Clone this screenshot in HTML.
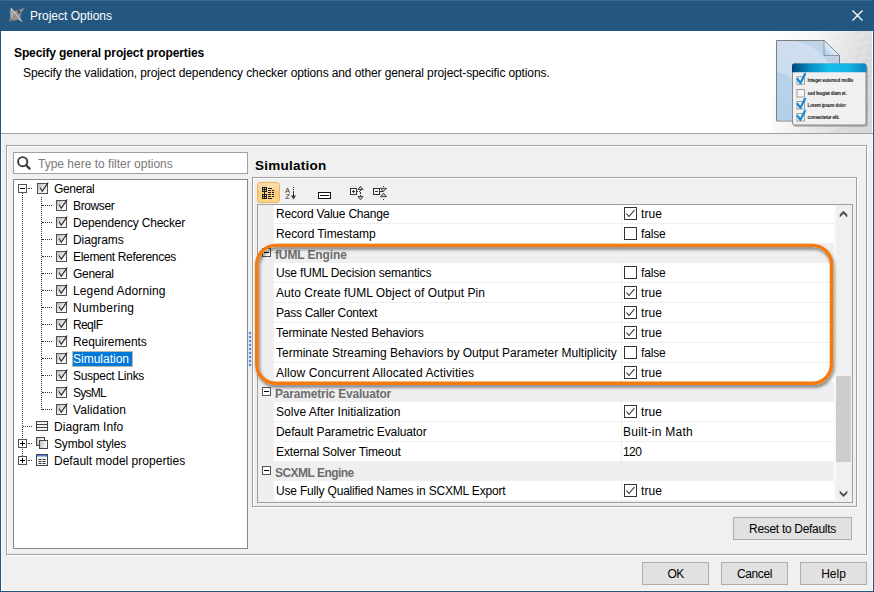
<!DOCTYPE html>
<html><head><meta charset="utf-8"><title>Project Options</title>
<style>
html,body{margin:0;padding:0}
body{width:874px;height:592px;overflow:hidden;position:relative;background:#f0f0f0;font-family:"Liberation Sans",sans-serif;font-size:12px;color:#000}
div,span{position:absolute;box-sizing:border-box;white-space:nowrap}
svg{position:absolute;overflow:visible}
.t{line-height:16px;height:16px}
.btn{border:1px solid #adadad;background:#e1e1e1;text-align:center;line-height:22px;height:23px}
.ti{left:0;width:234px;height:17px}
.cb{width:11px;height:11px;border:1px solid #505050;background:linear-gradient(135deg,#b8b8b8 0%,#ececec 55%,#fff 100%)}
.row{left:0;height:20px}
.c1{left:16px;width:347px;top:0;height:19px;background:#fff}
.c2{left:364px;width:212px;top:0;height:19px;background:#fff}
.vcb{left:2px;top:3px;width:13px;height:13px;border:1px solid #333;background:#fff}
</style></head><body>

<div style="left:0;top:0;width:874px;height:31px;background:#245780;border-top:1px solid #3a6991;border-left:1px solid #3a6991"></div>
<div style="left:0;top:0;width:1px;height:592px;background:#25567f"></div>
<div style="left:873px;top:0;width:1px;height:592px;background:#25567f"></div>
<div style="left:0;top:591px;width:874px;height:1px;background:#25567f"></div>
<div style="left:1px;top:31px;width:1px;height:560px;background:#fbf8f6"></div>
<div style="left:872px;top:31px;width:1px;height:560px;background:#fbf8f6"></div>
<div style="left:1px;top:590px;width:872px;height:1px;background:#fbf8f6"></div>
<svg style="left:0;top:0" width="40" height="31" viewBox="0 0 40 31"><defs><linearGradient id="aig" x1="0" y1="0" x2="1" y2="1"><stop offset="0" stop-color="#b8b8b8"/><stop offset="0.5" stop-color="#8c8c8c"/><stop offset="1" stop-color="#a8a8a8"/></linearGradient></defs>
<path d="M11 8 L14 11.3 L18.5 9.8 L24.8 7.8 L20.8 13.3 L20.4 18 L22 21.8 L18 19.6 L10.5 21.7 L9 21.2 L10.3 18 L10 12 Z" fill="url(#aig)"/>
<path d="M17 10.5 L19.5 9.8 L20.3 12.6 L18.7 13.8 Z" fill="#3c3c3c" opacity="0.85"/>
<path d="M10.5 20.3 L13.5 20 L12.5 21.2 L10 21.3 Z" fill="#333" opacity="0.7"/>
<path d="M11.2 8.3 L21.7 21.5" stroke="#e0e0e0" stroke-width="0.9" stroke-linecap="round"/>
<path d="M13 13 L11.5 18" stroke="#c8c8c8" stroke-width="1" opacity="0.7"/>
</svg>
<span class="t" style="left:30px;top:8px;color:#fff">Project Options</span>
<svg style="left:852px;top:10px" width="11" height="11" viewBox="0 0 11 11"><path d="M0.5 0.5 L10.5 10.5 M10.5 0.5 L0.5 10.5" stroke="#fff" stroke-width="1.3" fill="none"/></svg>
<div style="left:1px;top:31px;width:872px;height:102px;background:#fff"></div>
<div style="left:1px;top:133px;width:872px;height:1px;background:#a0a0a0"></div>
<span class="t" style="left:14px;top:45px;font-weight:bold;letter-spacing:-0.12px">Specify general project properties</span>
<span class="t" style="left:23px;top:65px;letter-spacing:-0.115px">Specify the validation, project dependency checker options and other general project-specific options.</span>
<svg style="left:772px;top:31px;overflow:hidden" width="100" height="102" viewBox="0 -1 100 102">
<defs>
<linearGradient id="bgg" x1="0" y1="0" x2="1" y2="0.35"><stop offset="0" stop-color="#fff"/><stop offset="0.4" stop-color="#f6f6f6"/><stop offset="1" stop-color="#d9dadb"/></linearGradient>
<linearGradient id="bgf" x1="0" y1="0" x2="1" y2="0"><stop offset="0" stop-color="#fff"/><stop offset="0.3" stop-color="#fff" stop-opacity="0"/></linearGradient>
<linearGradient id="pg" x1="0.8" y1="0" x2="0.2" y2="1"><stop offset="0" stop-color="#c3d3e8"/><stop offset="0.5" stop-color="#bcd0e7"/><stop offset="1" stop-color="#9cc6e6"/></linearGradient>
<linearGradient id="hb" x1="0" y1="0" x2="1" y2="0"><stop offset="0" stop-color="#00457a"/><stop offset="0.25" stop-color="#0a8fc4"/><stop offset="0.5" stop-color="#14bdea"/><stop offset="0.75" stop-color="#12b4e4"/><stop offset="1" stop-color="#0b86bd"/></linearGradient>
<linearGradient id="fold" x1="0" y1="1" x2="1" y2="0"><stop offset="0" stop-color="#9fc4ea"/><stop offset="0.6" stop-color="#f4f9ff"/><stop offset="1" stop-color="#fff"/></linearGradient>
<pattern id="grid" width="9" height="9" patternUnits="userSpaceOnUse" patternTransform="skewX(-35) rotate(-18)"><path d="M0 0 H9 M0 0 V9" stroke="#b7c0cc" stroke-width="0.6" fill="none"/></pattern>
<linearGradient id="gm" x1="0" y1="0" x2="1" y2="0.3"><stop offset="0.45" stop-color="#fff" stop-opacity="0"/><stop offset="1" stop-color="#fff" stop-opacity="0.9"/></linearGradient>
<mask id="gmask"><rect x="0" y="-1" width="100" height="102" fill="url(#gm)"/></mask>
</defs>
<rect x="0" y="-1" width="100" height="102" fill="url(#bgg)"/>
<rect x="0" y="-1" width="100" height="102" fill="url(#grid)" mask="url(#gmask)"/>
<path d="M4.5 8.5 H52 L67.5 23.5 V89 H4.5 Z" fill="url(#pg)" stroke="#7f7f7f" stroke-width="1"/>
<path d="M5 9 H22 Q58 14 67 60 V88.5 H5 Z" fill="#dbe6f3" opacity="0.6"/>
<path d="M5 40 Q30 45 44 88.5 H5 Z" fill="#a6c8e6" opacity="0.5"/>
<path d="M52 8.5 V23.5 H67.5 Z" fill="url(#fold)" stroke="#7f8a96" stroke-width="0.8" stroke-linejoin="round"/>
<rect x="22" y="34" width="74" height="61" rx="2" fill="#6e6e6e" opacity="0.3"/>
<rect x="21" y="33" width="74.5" height="61.5" rx="2" fill="#6e6e6e" opacity="0.2"/>
<rect x="20.5" y="32" width="73.5" height="61" rx="2" fill="#f0f0f0" stroke="#8a8a8a"/>
<path d="M20 40.3 V33.5 Q20 31.6 22 31.6 H92.5 Q94.5 31.6 94.5 33.5 V40.3 Z" fill="url(#hb)"/>
<g font-family="Liberation Sans, sans-serif" font-size="4.6" font-weight="bold" fill="#111" letter-spacing="-0.2">
<text x="35.6" y="50">Integer euismod mollis</text>
<text x="35.6" y="63">sed feugiat diam et.</text>
<text x="35.6" y="74.7">Lorem ipsum dolor</text>
<text x="35.6" y="86.6">consectetur elit.</text>
</g>
<g fill="#f6f6f6" stroke="#8a8a8a" stroke-width="0.8">
<rect x="25" y="44.8" width="7.5" height="7.5"/><rect x="25" y="57.5" width="7.5" height="7.5"/><rect x="25" y="69.5" width="7.5" height="7.5"/><rect x="25" y="81.5" width="7.5" height="7.5"/>
</g>
<g fill="none" stroke="#1489d6" stroke-width="2.2" stroke-linecap="round" stroke-linejoin="round">
<path d="M25.5 47 L28.5 51 L33 42"/><path d="M25.5 71.8 L28.5 75.8 L33 66.8"/><path d="M25.5 83.8 L28.5 87.8 L33 78.8"/>
</g>
</svg>
<div style="left:6px;top:145px;width:861px;height:410px;border:1px solid #fff;border-left-color:#a0a0a0;border-top-color:#a0a0a0;border-right-color:#a0a0a0;border-bottom-color:#a0a0a0"></div>
<div style="left:7px;top:146px;width:861px;height:410px;border:1px solid #fff;border-right-color:#fff;border-bottom-color:#fff;border-left-color:#fff;border-top-color:#fff;clip-path:polygon(0 0,100% 0,100% 100%,0 100%)"></div>
<div style="left:6px;top:145px;width:861px;height:410px;border:1px solid #a0a0a0"></div>
<div style="left:13px;top:152px;width:235px;height:22px;border:1px solid #a0a0a0;background:#fff"></div>
<svg style="left:16px;top:155px" width="16" height="16" viewBox="0 0 16 16"><circle cx="6.7" cy="6.7" r="4.6" fill="none" stroke="#3a3a3a" stroke-width="1.9"/><path d="M10.2 10.2 L13.6 13.6" stroke="#3a3a3a" stroke-width="2.3" stroke-linecap="round"/></svg>
<span class="t" style="left:38px;top:156px;color:#7a7a7a">Type here to filter options</span>
<div style="left:13px;top:179px;width:235px;height:370px;border:1px solid #828790;background:#fff"></div>
<div style="left:22px;top:193px;width:0;height:267px;border-left:1px dotted #333"></div>
<div style="left:41px;top:197px;width:0;height:213px;border-left:1px dotted #333"></div>
<div id="tree" style="left:14px;top:180px;width:233px;height:368px">
<div class="ti" style="top:0px">
<svg style="left:4px;top:4px" width="9" height="9" viewBox="0 0 9 9"><rect x="0.5" y="0.5" width="8" height="8" fill="#fff" stroke="#555"/><path d="M2 4.5 H7" stroke="#000" stroke-width="1"/></svg>
<div style="left:14px;top:8px;width:4px;height:0;border-top:1px dotted #333"></div>
<div class="cb" style="left:23px;top:3px"></div><svg style="left:23px;top:1px" width="13" height="13" viewBox="0 0 13 13"><path d="M3 6.5 L5.3 10.2 L11.2 1.5" fill="none" stroke="#2a2a2a" stroke-width="1.2"/></svg>
<span class="t" style="left:40px;top:1px;letter-spacing:-0.344px;">General</span>
</div>
<div class="ti" style="top:17px">
<div style="left:28px;top:8px;width:10px;height:0;border-top:1px dotted #333"></div>
<div class="cb" style="left:42px;top:3px"></div><svg style="left:42px;top:1px" width="13" height="13" viewBox="0 0 13 13"><path d="M3 6.5 L5.3 10.2 L11.2 1.5" fill="none" stroke="#2a2a2a" stroke-width="1.2"/></svg>
<span class="t" style="left:59px;top:1px;letter-spacing:-0.370px;">Browser</span>
</div>
<div class="ti" style="top:34px">
<div style="left:28px;top:8px;width:10px;height:0;border-top:1px dotted #333"></div>
<div class="cb" style="left:42px;top:3px"></div><svg style="left:42px;top:1px" width="13" height="13" viewBox="0 0 13 13"><path d="M3 6.5 L5.3 10.2 L11.2 1.5" fill="none" stroke="#2a2a2a" stroke-width="1.2"/></svg>
<span class="t" style="left:59px;top:1px;letter-spacing:-0.187px;">Dependency Checker</span>
</div>
<div class="ti" style="top:51px">
<div style="left:28px;top:8px;width:10px;height:0;border-top:1px dotted #333"></div>
<div class="cb" style="left:42px;top:3px"></div><svg style="left:42px;top:1px" width="13" height="13" viewBox="0 0 13 13"><path d="M3 6.5 L5.3 10.2 L11.2 1.5" fill="none" stroke="#2a2a2a" stroke-width="1.2"/></svg>
<span class="t" style="left:59px;top:1px;letter-spacing:-0.1px;">Diagrams</span>
</div>
<div class="ti" style="top:68px">
<div style="left:28px;top:8px;width:10px;height:0;border-top:1px dotted #333"></div>
<div class="cb" style="left:42px;top:3px"></div><svg style="left:42px;top:1px" width="13" height="13" viewBox="0 0 13 13"><path d="M3 6.5 L5.3 10.2 L11.2 1.5" fill="none" stroke="#2a2a2a" stroke-width="1.2"/></svg>
<span class="t" style="left:59px;top:1px;letter-spacing:-0.322px;">Element References</span>
</div>
<div class="ti" style="top:85px">
<div style="left:28px;top:8px;width:10px;height:0;border-top:1px dotted #333"></div>
<div class="cb" style="left:42px;top:3px"></div><svg style="left:42px;top:1px" width="13" height="13" viewBox="0 0 13 13"><path d="M3 6.5 L5.3 10.2 L11.2 1.5" fill="none" stroke="#2a2a2a" stroke-width="1.2"/></svg>
<span class="t" style="left:59px;top:1px;letter-spacing:-0.286px;">General</span>
</div>
<div class="ti" style="top:102px">
<div style="left:28px;top:8px;width:10px;height:0;border-top:1px dotted #333"></div>
<div class="cb" style="left:42px;top:3px"></div><svg style="left:42px;top:1px" width="13" height="13" viewBox="0 0 13 13"><path d="M3 6.5 L5.3 10.2 L11.2 1.5" fill="none" stroke="#2a2a2a" stroke-width="1.2"/></svg>
<span class="t" style="left:59px;top:1px;letter-spacing:0.121px;">Legend Adorning</span>
</div>
<div class="ti" style="top:119px">
<div style="left:28px;top:8px;width:10px;height:0;border-top:1px dotted #333"></div>
<div class="cb" style="left:42px;top:3px"></div><svg style="left:42px;top:1px" width="13" height="13" viewBox="0 0 13 13"><path d="M3 6.5 L5.3 10.2 L11.2 1.5" fill="none" stroke="#2a2a2a" stroke-width="1.2"/></svg>
<span class="t" style="left:59px;top:1px;letter-spacing:0.291px;">Numbering</span>
</div>
<div class="ti" style="top:136px">
<div style="left:28px;top:8px;width:10px;height:0;border-top:1px dotted #333"></div>
<div class="cb" style="left:42px;top:3px"></div><svg style="left:42px;top:1px" width="13" height="13" viewBox="0 0 13 13"><path d="M3 6.5 L5.3 10.2 L11.2 1.5" fill="none" stroke="#2a2a2a" stroke-width="1.2"/></svg>
<span class="t" style="left:59px;top:1px;letter-spacing:-0.640px;">ReqIF</span>
</div>
<div class="ti" style="top:153px">
<div style="left:28px;top:8px;width:10px;height:0;border-top:1px dotted #333"></div>
<div class="cb" style="left:42px;top:3px"></div><svg style="left:42px;top:1px" width="13" height="13" viewBox="0 0 13 13"><path d="M3 6.5 L5.3 10.2 L11.2 1.5" fill="none" stroke="#2a2a2a" stroke-width="1.2"/></svg>
<span class="t" style="left:59px;top:1px;letter-spacing:-0.083px;">Requirements</span>
</div>
<div class="ti" style="top:170px">
<div style="left:28px;top:8px;width:10px;height:0;border-top:1px dotted #333"></div>
<div class="cb" style="left:42px;top:3px"></div><svg style="left:42px;top:1px" width="13" height="13" viewBox="0 0 13 13"><path d="M3 6.5 L5.3 10.2 L11.2 1.5" fill="none" stroke="#2a2a2a" stroke-width="1.2"/></svg>
<div style="left:58px;top:1px;width:61px;height:16px;background:#0078d7;border:1px solid #bdb7a8"></div>
<span class="t" style="left:59px;top:1px;color:#fff;">Simulation</span>
</div>
<div class="ti" style="top:187px">
<div style="left:28px;top:8px;width:10px;height:0;border-top:1px dotted #333"></div>
<div class="cb" style="left:42px;top:3px"></div><svg style="left:42px;top:1px" width="13" height="13" viewBox="0 0 13 13"><path d="M3 6.5 L5.3 10.2 L11.2 1.5" fill="none" stroke="#2a2a2a" stroke-width="1.2"/></svg>
<span class="t" style="left:59px;top:1px;letter-spacing:-0.278px;">Suspect Links</span>
</div>
<div class="ti" style="top:204px">
<div style="left:28px;top:8px;width:10px;height:0;border-top:1px dotted #333"></div>
<div class="cb" style="left:42px;top:3px"></div><svg style="left:42px;top:1px" width="13" height="13" viewBox="0 0 13 13"><path d="M3 6.5 L5.3 10.2 L11.2 1.5" fill="none" stroke="#2a2a2a" stroke-width="1.2"/></svg>
<span class="t" style="left:59px;top:1px;letter-spacing:-0.720px;">SysML</span>
</div>
<div class="ti" style="top:221px">
<div style="left:28px;top:8px;width:10px;height:0;border-top:1px dotted #333"></div>
<div class="cb" style="left:42px;top:3px"></div><svg style="left:42px;top:1px" width="13" height="13" viewBox="0 0 13 13"><path d="M3 6.5 L5.3 10.2 L11.2 1.5" fill="none" stroke="#2a2a2a" stroke-width="1.2"/></svg>
<span class="t" style="left:59px;top:1px;letter-spacing:0.120px;">Validation</span>
</div>
<div class="ti" style="top:238px">
<div style="left:9px;top:8px;width:9px;height:0;border-top:1px dotted #333"></div>
<svg style="left:22px;top:3px" width="12" height="10" viewBox="0 0 12 10"><rect x="0.5" y="0.5" width="11" height="9" fill="#f4f4f4" stroke="#444"/><path d="M1 3.5 H11 M1 6.5 H11" stroke="#444" stroke-width="1"/></svg>
<span class="t" style="left:40px;top:1px;letter-spacing:0.051px;">Diagram Info</span>
</div>
<div class="ti" style="top:255px">
<svg style="left:4px;top:4px" width="9" height="9" viewBox="0 0 9 9"><rect x="0.5" y="0.5" width="8" height="8" fill="#fff" stroke="#555"/><path d="M2 4.5 H7" stroke="#000" stroke-width="1"/><path d="M4.5 2 V7" stroke="#000" stroke-width="1"/></svg>
<div style="left:14px;top:8px;width:4px;height:0;border-top:1px dotted #333"></div>
<svg style="left:22px;top:2px" width="12" height="12" viewBox="0 0 12 12"><defs><linearGradient id="syg" x1="0" y1="0" x2="1" y2="0"><stop offset="0" stop-color="#c4c4c4"/><stop offset="1" stop-color="#fff"/></linearGradient></defs><rect x="0.5" y="0.5" width="8" height="8" fill="url(#syg)" stroke="#444"/><rect x="3.5" y="3.5" width="8" height="8" fill="url(#syg)" stroke="#444"/></svg>
<span class="t" style="left:40px;top:1px;letter-spacing:-0.140px;">Symbol styles</span>
</div>
<div class="ti" style="top:272px">
<svg style="left:4px;top:4px" width="9" height="9" viewBox="0 0 9 9"><rect x="0.5" y="0.5" width="8" height="8" fill="#fff" stroke="#555"/><path d="M2 4.5 H7" stroke="#000" stroke-width="1"/><path d="M4.5 2 V7" stroke="#000" stroke-width="1"/></svg>
<div style="left:14px;top:8px;width:4px;height:0;border-top:1px dotted #333"></div>
<svg style="left:22px;top:2px" width="12" height="12" viewBox="0 0 12 12"><rect x="0.5" y="0.5" width="11" height="11" fill="#f6f6f6" stroke="#444"/><rect x="1" y="1" width="10" height="1.5" fill="#4f86d8"/><path d="M2.5 5.5 H5.5 M6.5 5.5 H9.5 M2.5 7.5 H5.5 M6.5 7.5 H9.5 M2.5 9.5 H5.5 M6.5 9.5 H9.5" stroke="#333" stroke-width="1"/></svg>
<span class="t" style="left:40px;top:1px;letter-spacing:0.017px;">Default model properties</span>
</div>
</div>
<svg style="left:248px;top:331px" width="4" height="37" viewBox="0 0 4 37"><rect x="1" y="1" width="2" height="2" fill="#3f7fdc"/><rect x="0.5" y="0.5" width="3" height="3" fill="#6fa0e8" opacity="0.35"/><rect x="1" y="5" width="2" height="2" fill="#3f7fdc"/><rect x="0.5" y="4.5" width="3" height="3" fill="#6fa0e8" opacity="0.35"/><rect x="1" y="9" width="2" height="2" fill="#3f7fdc"/><rect x="0.5" y="8.5" width="3" height="3" fill="#6fa0e8" opacity="0.35"/><rect x="1" y="13" width="2" height="2" fill="#3f7fdc"/><rect x="0.5" y="12.5" width="3" height="3" fill="#6fa0e8" opacity="0.35"/><rect x="1" y="17" width="2" height="2" fill="#3f7fdc"/><rect x="0.5" y="16.5" width="3" height="3" fill="#6fa0e8" opacity="0.35"/><rect x="1" y="21" width="2" height="2" fill="#3f7fdc"/><rect x="0.5" y="20.5" width="3" height="3" fill="#6fa0e8" opacity="0.35"/><rect x="1" y="25" width="2" height="2" fill="#3f7fdc"/><rect x="0.5" y="24.5" width="3" height="3" fill="#6fa0e8" opacity="0.35"/><rect x="1" y="29" width="2" height="2" fill="#3f7fdc"/><rect x="0.5" y="28.5" width="3" height="3" fill="#6fa0e8" opacity="0.35"/><rect x="1" y="33" width="2" height="2" fill="#3f7fdc"/><rect x="0.5" y="32.5" width="3" height="3" fill="#6fa0e8" opacity="0.35"/></svg>
<span style="left:255px;top:157px;font-size:13.5px;font-weight:bold;line-height:18px;height:18px;letter-spacing:0.25px">Simulation</span>
<div style="left:252px;top:177px;width:605px;height:330px;border:1px solid #a0a0a0"></div>
<div style="left:253px;top:178px;width:605px;height:330px;border:1px solid #fff;border-right-color:#fff;border-bottom-color:#fff"></div>
<div style="left:252px;top:177px;width:605px;height:330px;border:1px solid #a0a0a0"></div>
<div style="left:257px;top:182px;width:23px;height:21px;border:1px solid #efb45c;border-radius:3px;background:linear-gradient(#fcddb0 0%,#fad293 42%,#f9c878 44%,#fad58a 100%)"></div>
<svg style="left:0;top:0" width="874" height="592" viewBox="0 0 874 592">
<g shape-rendering="crispEdges" fill="none" stroke="#1a1a1a" stroke-width="1">
<rect x="262.5" y="187.5" width="4" height="4"/><path d="M264.5 187 V192 M262 189.5 H267"/>
<rect x="262.5" y="194.5" width="4" height="4"/><path d="M264.5 194 V199 M262 196.5 H267"/>
<path d="M264.5 192 V194"/>
<path d="M268 188.5 H272 M268 190.5 H271 M272 190.5 H274 M268 192.5 H271 M272 192.5 H274 M268 194.5 H271 M272 194.5 H274 M268 196.5 H271 M272 196.5 H274 M268 198.5 H272"/>
</g>
<g font-family="Liberation Sans, sans-serif" font-size="7.5" fill="#333"><text x="285" y="193">A</text><text x="285.2" y="199.3">Z</text></g>
<g shape-rendering="crispEdges" stroke="#333" stroke-width="1" fill="none"><path d="M293.5 187 V188 M293.5 189 V190 M293.5 191 V196"/></g>
<path d="M291 195.5 H296 L293.5 199.5 Z" fill="#333"/>
<g shape-rendering="crispEdges"><rect x="318" y="192" width="13" height="7" fill="#111"/><rect x="319" y="193" width="11" height="5" fill="#fff"/><rect x="320" y="195" width="9" height="1" fill="#111"/></g>
<g shape-rendering="crispEdges" fill="none" stroke="#333" stroke-width="1">
<rect x="350.5" y="188.5" width="6" height="6" fill="#f4f4f4"/><path d="M352 191.5 H355 M353.5 190 V193"/>
<path d="M357 191.5 H358 M359 191.5 H360 M360.5 190 V191 M360.5 192 V194 M360.5 195 V196"/>
<rect x="373.5" y="188.5" width="6" height="6" fill="#f4f4f4"/><path d="M375 191.5 H378"/>
<path d="M380 191.5 H383 M383.5 186 V187 M383.5 199 V200"/>
</g>
<g fill="#b9c3ee" stroke="#333" stroke-width="0.9" stroke-linejoin="round">
<path d="M358 189.5 L360.5 186.3 L363 189.5 Z"/><path d="M358 196.5 L360.5 199.7 L363 196.5 Z"/>
<path d="M380.5 188.3 L383.5 191.5 L386.5 188.3 Z"/><path d="M380.5 196.7 L383.5 193.2 L386.5 196.7 Z"/>
</g>
</svg>
<div style="left:257px;top:204px;width:596px;height:299px;border:1px solid #a0a0a0;background:#f0f0f0"></div>
<div id="tbl" style="left:258px;top:205px;width:577px;height:297px;background:#efefef;overflow:hidden">
<div class="row" style="top:-1px;width:577px"><div class="c1"><span class="t" style="left:2px;top:2px;letter-spacing:-0.211px;">Record Value Change</span></div><div class="c2"><div class="vcb"><svg style="left:0;top:0" width="11" height="11" viewBox="0 0 11 11"><path d="M1.5 5.5 L4 8.5 L9.5 2" fill="none" stroke="#222" stroke-width="1.1"/></svg></div><span class="t" style="left:19px;top:2px;letter-spacing:0.120px;">true</span></div></div>
<div class="row" style="top:19px;width:577px"><div class="c1"><span class="t" style="left:2px;top:2px;letter-spacing:-0.075px;">Record Timestamp</span></div><div class="c2"><div class="vcb"></div><span class="t" style="left:19px;top:2px;letter-spacing:-0.150px;">false</span></div></div>
<div class="row" style="top:39px;width:577px;height:19px"><svg style="left:4px;top:4px" width="9" height="9" viewBox="0 0 9 9"><rect x="0.5" y="0.5" width="8" height="8" fill="#fff" stroke="#555"/><path d="M2 4.5 H7" stroke="#000"/></svg><span class="t" style="left:17px;top:3px;font-weight:bold;color:#6d6d6d;letter-spacing:-0.128px;">fUML Engine</span></div>
<div class="row" style="top:58px;width:577px"><div class="c1"><span class="t" style="left:2px;top:2px;letter-spacing:-0.161px;">Use fUML Decision semantics</span></div><div class="c2"><div class="vcb"></div><span class="t" style="left:19px;top:2px;letter-spacing:-0.150px;">false</span></div></div>
<div class="row" style="top:78px;width:577px"><div class="c1"><span class="t" style="left:2px;top:2px;letter-spacing:0.054px;">Auto Create fUML Object of Output Pin</span></div><div class="c2"><div class="vcb"><svg style="left:0;top:0" width="11" height="11" viewBox="0 0 11 11"><path d="M1.5 5.5 L4 8.5 L9.5 2" fill="none" stroke="#222" stroke-width="1.1"/></svg></div><span class="t" style="left:19px;top:2px;letter-spacing:0.120px;">true</span></div></div>
<div class="row" style="top:98px;width:577px"><div class="c1"><span class="t" style="left:2px;top:2px;letter-spacing:-0.263px;">Pass Caller Context</span></div><div class="c2"><div class="vcb"><svg style="left:0;top:0" width="11" height="11" viewBox="0 0 11 11"><path d="M1.5 5.5 L4 8.5 L9.5 2" fill="none" stroke="#222" stroke-width="1.1"/></svg></div><span class="t" style="left:19px;top:2px;letter-spacing:0.120px;">true</span></div></div>
<div class="row" style="top:118px;width:577px"><div class="c1"><span class="t" style="left:2px;top:2px;letter-spacing:-0.122px;">Terminate Nested Behaviors</span></div><div class="c2"><div class="vcb"><svg style="left:0;top:0" width="11" height="11" viewBox="0 0 11 11"><path d="M1.5 5.5 L4 8.5 L9.5 2" fill="none" stroke="#222" stroke-width="1.1"/></svg></div><span class="t" style="left:19px;top:2px;letter-spacing:0.120px;">true</span></div></div>
<div class="row" style="top:138px;width:577px"><div class="c1"><span class="t" style="left:2px;top:2px;">Terminate Streaming Behaviors by Output Parameter Multiplicity</span></div><div class="c2"><div class="vcb"></div><span class="t" style="left:19px;top:2px;letter-spacing:-0.150px;">false</span></div></div>
<div class="row" style="top:158px;width:577px"><div class="c1"><span class="t" style="left:2px;top:2px;letter-spacing:0.126px;">Allow Concurrent Allocated Activities</span></div><div class="c2"><div class="vcb"><svg style="left:0;top:0" width="11" height="11" viewBox="0 0 11 11"><path d="M1.5 5.5 L4 8.5 L9.5 2" fill="none" stroke="#222" stroke-width="1.1"/></svg></div><span class="t" style="left:19px;top:2px;letter-spacing:0.120px;">true</span></div></div>
<div class="row" style="top:178px;width:577px;height:19px"><svg style="left:4px;top:4px" width="9" height="9" viewBox="0 0 9 9"><rect x="0.5" y="0.5" width="8" height="8" fill="#fff" stroke="#555"/><path d="M2 4.5 H7" stroke="#000"/></svg><span class="t" style="left:17px;top:3px;font-weight:bold;color:#6d6d6d;letter-spacing:-0.2px;">Parametric Evaluator</span></div>
<div class="row" style="top:197px;width:577px"><div class="c1"><span class="t" style="left:2px;top:2px;letter-spacing:0.015px;">Solve After Initialization</span></div><div class="c2"><div class="vcb"><svg style="left:0;top:0" width="11" height="11" viewBox="0 0 11 11"><path d="M1.5 5.5 L4 8.5 L9.5 2" fill="none" stroke="#222" stroke-width="1.1"/></svg></div><span class="t" style="left:19px;top:2px;letter-spacing:0.120px;">true</span></div></div>
<div class="row" style="top:217px;width:577px"><div class="c1"><span class="t" style="left:2px;top:2px;letter-spacing:-0.101px;">Default Parametric Evaluator</span></div><div class="c2"><span class="t" style="left:1px;top:2px;letter-spacing:0.25px;">Built-in Math</span></div></div>
<div class="row" style="top:237px;width:577px"><div class="c1"><span class="t" style="left:2px;top:2px;letter-spacing:-0.114px;">External Solver Timeout</span></div><div class="c2"><span class="t" style="left:1px;top:2px;letter-spacing:-0.550px;">120</span></div></div>
<div class="row" style="top:257px;width:577px;height:19px"><svg style="left:4px;top:4px" width="9" height="9" viewBox="0 0 9 9"><rect x="0.5" y="0.5" width="8" height="8" fill="#fff" stroke="#555"/><path d="M2 4.5 H7" stroke="#000"/></svg><span class="t" style="left:17px;top:3px;font-weight:bold;color:#6d6d6d;letter-spacing:-0.535px;">SCXML Engine</span></div>
<div class="row" style="top:276px;width:577px"><div class="c1"><span class="t" style="left:2px;top:2px;letter-spacing:-0.185px;">Use Fully Qualified Names in SCXML Export</span></div><div class="c2"><div class="vcb"><svg style="left:0;top:0" width="11" height="11" viewBox="0 0 11 11"><path d="M1.5 5.5 L4 8.5 L9.5 2" fill="none" stroke="#222" stroke-width="1.1"/></svg></div><span class="t" style="left:19px;top:2px;letter-spacing:0.120px;">true</span></div></div>
</div>
<div style="left:834px;top:205px;width:2px;height:297px;background:#f8f8f8"></div>
<svg style="left:0;top:0" width="874" height="592" viewBox="0 0 874 592"><path d="M843.5 210.8 L847.3 214.6 V217.4 L843.5 213.7 L839.7 217.4 V214.6 Z" fill="#505050"/><path d="M843.5 497.1 L847.3 493.3 V490.5 L843.5 494.2 L839.7 490.5 V493.3 Z" fill="#505050"/></svg>
<div style="left:836px;top:376px;width:15px;height:86px;background:#cdcdcd"></div>
<svg style="left:0;top:0" width="874" height="592" viewBox="0 0 874 592"><defs><filter id="osh" x="-5%" y="-10%" width="110%" height="125%"><feDropShadow dx="1.3" dy="2.6" stdDeviation="1.8" flood-color="#000" flood-opacity="0.5"/></filter></defs><rect x="256.7" y="245.4" width="574.8" height="137.9" rx="19" ry="19" fill="none" stroke="#f57a0c" stroke-width="3.4" filter="url(#osh)"/></svg>
<div class="btn" style="left:733px;top:517px;width:119px"><span style="position:static;letter-spacing:-0.3px">Reset to Defaults</span></div>
<div class="btn" style="left:642px;top:562px;width:67px;letter-spacing:-0.6px">OK</div>
<div class="btn" style="left:721px;top:562px;width:67px;letter-spacing:-0.4px">Cancel</div>
<div class="btn" style="left:800px;top:562px;width:67px">Help</div>
</body></html>
